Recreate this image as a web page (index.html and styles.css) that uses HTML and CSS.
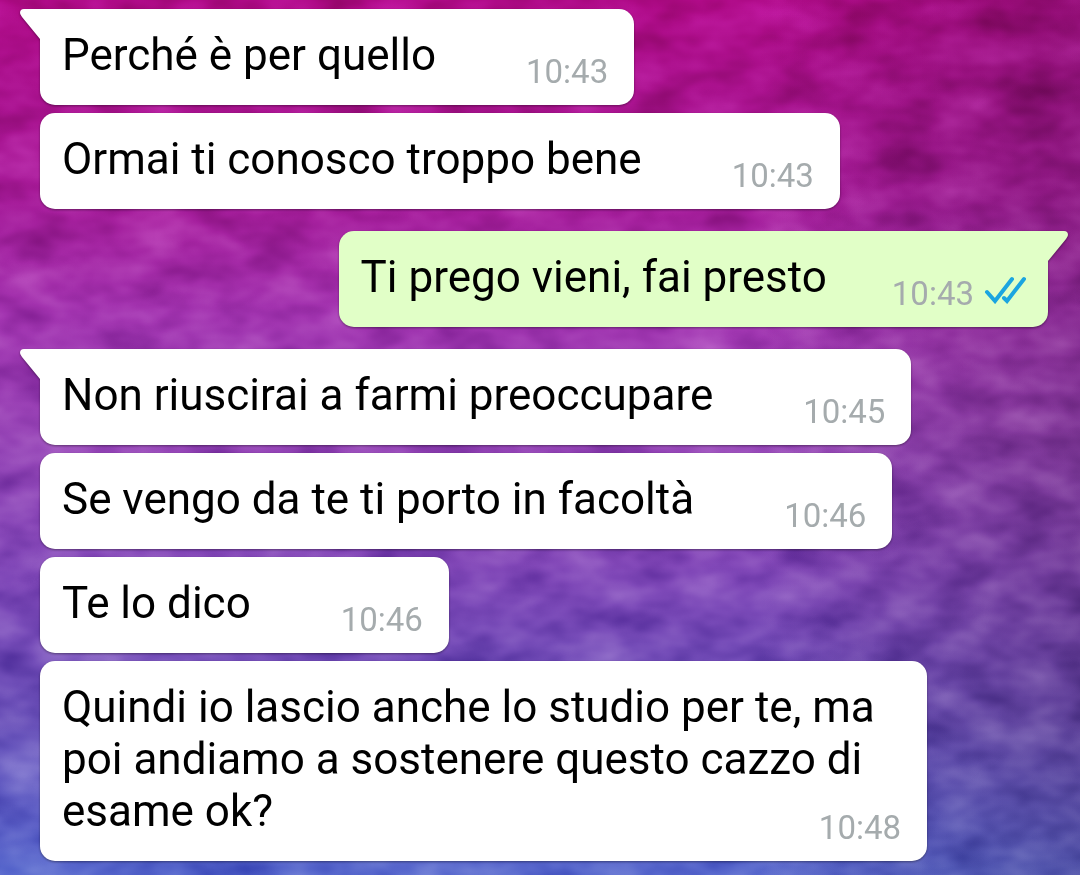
FILE: index.html
```html
<!DOCTYPE html>
<html lang="it">
<head>
    <meta charset="UTF-8">
    <meta name="viewport" content="width=device-width, initial-scale=1.0">
    <title>Chat</title>
    <link rel="stylesheet" href="styles.css">
</head>
<body>
    <!-- Wallpaper grain -->
    <svg class="wallpaper" aria-hidden="true">
        <filter id="grain" x="0" y="0" width="100%" height="100%" color-interpolation-filters="sRGB">
            <feTurbulence type="fractalNoise" baseFrequency="0.016 0.028" numOctaves="3" seed="21"/>
            <feColorMatrix type="matrix" values="1 0 0 0 0  1 0 0 0 0  1 0 0 0 0  0 0 0 0 1"/>
        </filter>
        <rect width="100%" height="100%" filter="url(#grain)"/>
    </svg>
    <main class="chat">
        <div class="group">
            <div class="bubble tail">
                <span class="text">Perché è per quello</span>
                <span class="meta"><time>10:43</time></span>
            </div>
            <div class="bubble">
                <span class="text">Ormai ti conosco troppo bene</span>
                <span class="meta"><time>10:43</time></span>
            </div>
        </div>
        <div class="group sent">
            <div class="bubble tail">
                <span class="text">Ti prego vieni, fai presto</span>
                <span class="meta">
                    <time>10:43</time>
                    <svg class="ticks" viewBox="0 0 42 28" role="img" aria-label="Letto">
                        <path d="M3 16L11 25L28 3M20 22L23 25L40 3"/>
                    </svg>
                </span>
            </div>
        </div>
        <div class="group">
            <div class="bubble tail">
                <span class="text">Non riuscirai a farmi preoccupare</span>
                <span class="meta"><time>10:45</time></span>
            </div>
            <div class="bubble">
                <span class="text">Se vengo da te ti porto in facoltà</span>
                <span class="meta"><time>10:46</time></span>
            </div>
            <div class="bubble">
                <span class="text">Te lo dico</span>
                <span class="meta"><time>10:46</time></span>
            </div>
            <div class="bubble">
                <span class="text">Quindi io lascio anche lo studio per te, ma poi andiamo a sostenere questo cazzo di esame ok?</span>
                <span class="meta"><time>10:48</time></span>
            </div>
        </div>
    </main>
</body>
</html>
```
FILE: styles.css
```css
* {
    box-sizing: border-box;
}
body {
    margin: 0;
    min-height: 100vh;
    font-family: Roboto, sans-serif;
    color: #000;
    background:
        linear-gradient(90deg, rgba(60, 20, 60, 0) 70%, rgba(60, 20, 60, 0.25) 100%),
        linear-gradient(180deg, #ae0a86 0%, #a61a98 22%, #a234b0 36%, #9644b6 50%, #8048b8 66%, #6a50b8 82%, #5566cc 100%);
}
.wallpaper {
    position: fixed;
    inset: 0;
    width: 100%;
    height: 100%;
    z-index: -1;
    mix-blend-mode: soft-light;
    opacity: 0.7;
}
.chat {
    display: flex;
    flex-direction: column;
    gap: 22px;
    padding: 9px 32px 14px 40px;
}
.group {
    display: flex;
    flex-direction: column;
    align-items: flex-start;
    gap: 8px;
}
.sent {
    align-items: flex-end;
}
.bubble {
    position: relative;
    max-width: 88%;
    padding: 20px 26px 13px 22px;
    border-radius: 15px;
    background-color: #fff;
    font-size: 44px;
    line-height: 52px;
    filter: drop-shadow(0 1px 1px rgba(0, 0, 0, 0.4));
}
.meta {
    float: right;
    display: flex;
    gap: 12px;
    margin: 23px 0 0 90px;
    color: #a5abad;
    font-size: 33px;
    line-height: 40px;
}
.tail {
    border-top-left-radius: 0;
}
.tail::before {
    content: "";
    position: absolute;
    top: 0;
    left: -20px;
    width: 21px;
    height: 32px;
    background-color: inherit;
    clip-path: path("M21 0H4Q0 0 0 4Q0 5 2 8L20 30L21 32Z");
}
.sent .bubble {
    background-color: #e1ffc7;
    padding-right: 22px;
}
.sent .meta {
    gap: 10px;
    margin-left: 65px;
}
.sent .tail {
    border-radius: 15px 0 15px 15px;
}
.sent .tail::before {
    left: auto;
    right: -20px;
    transform: scaleX(-1);
}
.ticks {
    width: 42px;
    height: 28px;
    margin-top: 2px;
    fill: none;
    stroke: #1ba5e0;
    stroke-width: 4;
    stroke-linecap: round;
}
```
